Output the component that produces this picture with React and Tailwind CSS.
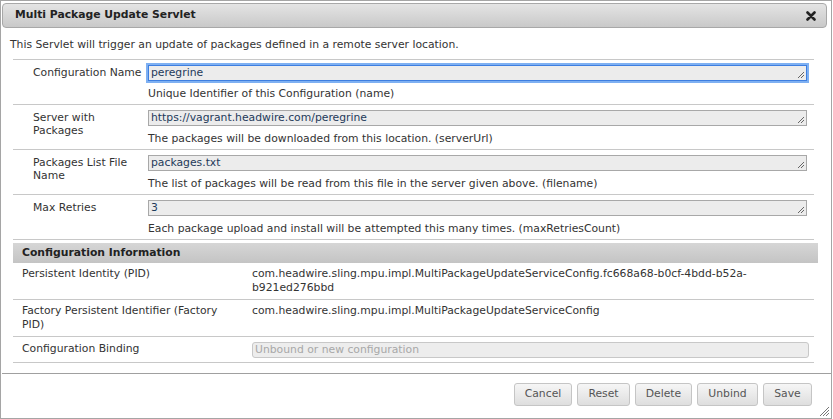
import React from "react";

const Grip = ({ className = "" }) => (
  <svg className={className} width="8" height="8" viewBox="0 0 8 8">
    <path d="M7 1 L1 7 M7 4 L4 7" stroke="#666" strokeWidth="1" />
  </svg>
);

function Field({ label, value, desc, focused }) {
  return (
    <div className="flex h-[45px] border-b border-[#c8c8c8]">
      <div className="w-[135px] shrink-0 pl-[20px] pt-[6px] leading-[13px] text-[#333] pr-[2px]">
        {label}
      </div>
      <div className="flex-1 pt-[5px] pr-[7px]">
        <div
          className={
            "relative h-[16px] bg-[#ececec] pl-[2px] leading-[14px] text-[#1e3a5a] " +
            (focused
              ? "border border-[#3d7ee0] shadow-[0_0_0_2px_#7eb0f2]"
              : "border border-[#a8a8a8]")
          }
        >
          {value}
          <Grip className="absolute right-[1px] bottom-[1px]" />
        </div>
        <div className="mt-[6px] text-[#333] leading-[14px]">{desc}</div>
      </div>
    </div>
  );
}

function InfoRow({ label, children }) {
  return (
    <div className="flex border-b border-[#c8c8c8] pt-[4px] pb-[4px]">
      <div className="w-[239px] shrink-0 pl-[9px] leading-[14px] text-[#333]">{label}</div>
      <div className="flex-1 leading-[14px] text-[#333]">{children}</div>
    </div>
  );
}

function Btn({ children, w }) {
  return (
    <div
      className={
        "h-[23px] flex items-center justify-center rounded-[3px] border border-[#c5c5c5] bg-gradient-to-b from-[#f6f6f6] to-[#dedede] text-[#555] " +
        w
      }
    >
      {children}
    </div>
  );
}

export default function App() {
  return (
    <div
      className="relative w-[832px] h-[419px] border border-[#a5a5a5] bg-white text-[10.8px] overflow-hidden"
      style={{ fontFamily: '"DejaVu Sans", Verdana, sans-serif' }}
    >
      <div className="mx-[1px] mt-[2px] w-[825px] h-[25px] rounded-[4px] border border-[#a8a8a8] bg-gradient-to-b from-[#e4e4e4] to-[#c9c9c9] flex items-center justify-between pl-[12px] pr-[10px]">
        <span className="font-bold text-[#222]">Multi Package Update Servlet</span>
        <svg width="10" height="10" viewBox="0 0 10 10">
          <path d="M1.5 1.5 L8.5 8.5 M8.5 1.5 L1.5 8.5" stroke="#222" strokeWidth="2.6" strokeLinecap="round" />
        </svg>
      </div>

      <div className="pl-[9px] pt-[10px] text-[#333] leading-[14px]">
        This Servlet will trigger an update of packages defined in a remote server location.
      </div>

      <div className="ml-[12px] w-[801px] mt-[7px] border-t border-[#c8c8c8]">
        <Field
          label="Configuration Name"
          value="peregrine"
          desc="Unique Identifier of this Configuration (name)"
          focused
        />
        <Field
          label="Server with Packages"
          value="https://vagrant.headwire.com/peregrine"
          desc="The packages will be downloaded from this location. (serverUrl)"
        />
        <Field
          label="Packages List File Name"
          value="packages.txt"
          desc="The list of packages will be read from this file in the server given above. (filename)"
        />
        <Field
          label="Max Retries"
          value="3"
          desc="Each package upload and install will be attempted this many times. (maxRetriesCount)"
        />
      </div>

      <div className="ml-[12px] w-[805px] mt-[3px] h-[20px] bg-gradient-to-b from-[#d6d6d6] to-[#c4c4c4] flex items-center pl-[9px] font-bold text-[#222]">
        Configuration Information
      </div>

      <div className="ml-[12px] w-[801px]">
        <InfoRow label="Persistent Identity (PID)">
          com.headwire.sling.mpu.impl.MultiPackageUpdateServiceConfig.fc668a68-b0cf-4bdd-b52a-
          <br />
          b921ed276bbd
        </InfoRow>
        <InfoRow label={<>Factory Persistent Identifier (Factory<br />PID)</>}>
          com.headwire.sling.mpu.impl.MultiPackageUpdateServiceConfig
        </InfoRow>
        <div className="flex border-b border-[#c8c8c8] h-[26px] items-center">
          <div className="w-[239px] shrink-0 pl-[9px] text-[#333]">Configuration Binding</div>
          <div className="w-[557px] h-[16px] rounded-[3px] border border-[#c8c8c8] bg-[#ededed] text-[#a8a8a8] pl-[2px] leading-[14px]">
            Unbound or new configuration
          </div>
        </div>
      </div>

      <div className="mt-[10px] border-t border-[#a0a0a0] ml-[1px]">
        <div className="flex justify-end gap-[5px] pt-[9px] pr-[19px]">
          <Btn w="w-[58px]">Cancel</Btn>
          <Btn w="w-[53px]">Reset</Btn>
          <Btn w="w-[57px]">Delete</Btn>
          <Btn w="w-[61px]">Unbind</Btn>
          <Btn w="w-[49px]">Save</Btn>
        </div>
      </div>

      <svg className="absolute right-[1px] bottom-[1px]" width="11" height="11" viewBox="0 0 11 11">
        <path d="M10 1 L1 10 M10 4 L4 10 M10 7 L7 10" stroke="#777" strokeWidth="1" />
      </svg>
    </div>
  );
}
